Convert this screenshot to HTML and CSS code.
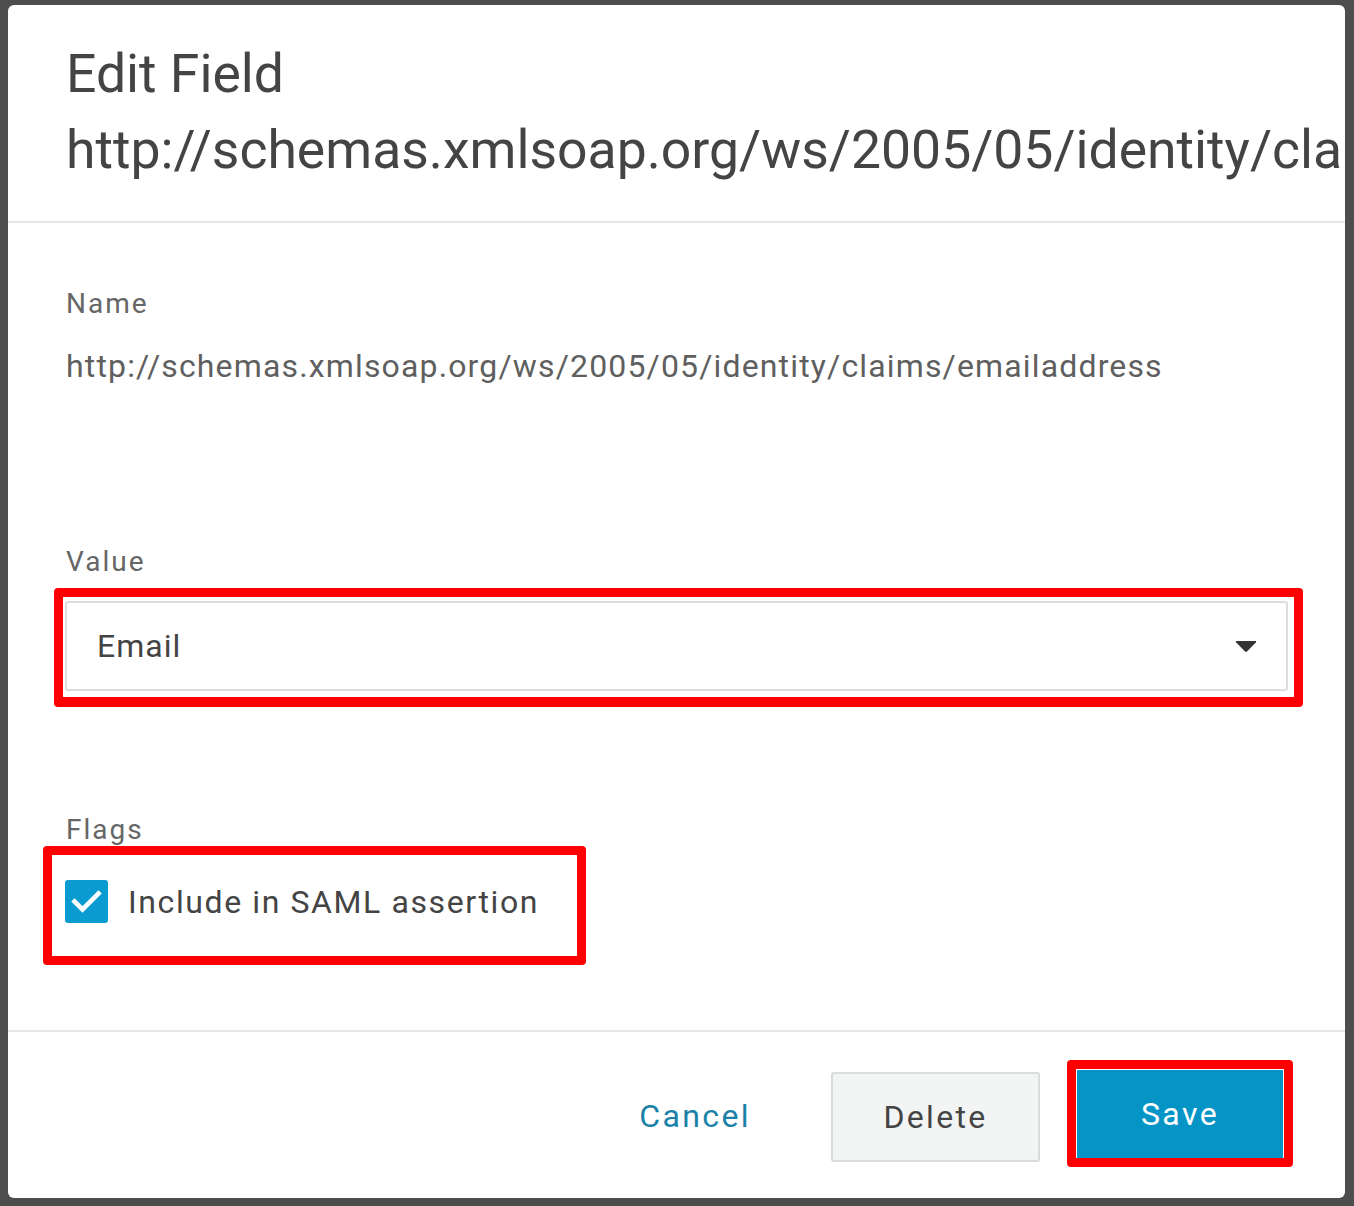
FILE: index.html
```html
<!DOCTYPE html>
<html lang="en">
<head>
<meta charset="utf-8">
<title>Edit Field</title>
<link rel="stylesheet" href="styles.css">
</head>
<body>
<div class="dialog">
  <header class="dialog-header">
    <h1 class="title">Edit Field<br>http://schemas.xmlsoap.org/ws/2005/05/identity/claims/emailaddress</h1>
  </header>
  <main class="dialog-body">
    <div class="label name-label">Name</div>
    <div class="name-value">http://schemas.xmlsoap.org/ws/2005/05/identity/claims/emailaddress</div>

    <div class="label value-label">Value</div>
    <div class="annot annot-select">
      <div class="select">
        <span class="select-text">Email</span>
        <svg class="select-arrow" width="22" height="11" viewBox="0 0 22 11"><path d="M1 1.2 Q0.4 0 1.8 0 L20.2 0 Q21.6 0 21 1.2 L12.2 10.2 Q11 11.3 9.8 10.2 Z" fill="#333"/></svg>
      </div>
    </div>

    <div class="label flags-label">Flags</div>
    <div class="annot annot-check">
      <label class="check-row">
        <span class="checkbox">
          <svg width="43" height="43" viewBox="0 0 43 43"><polyline points="9.5,21.5 17.5,29.5 33.5,13.5" fill="none" stroke="#fff" stroke-width="4.6" stroke-linecap="square"/></svg>
        </span>
        <span class="check-text">Include in SAML assertion</span>
      </label>
    </div>
  </main>
  <footer class="dialog-footer">
    <button class="btn btn-link">Cancel</button>
    <button class="btn btn-secondary">Delete</button>
    <div class="annot annot-save">
      <button class="btn btn-primary">Save</button>
    </div>
  </footer>
</div>
</body>
</html>
```

FILE: styles.css
```css
* { box-sizing: border-box; }

html, body {
  margin: 0;
  height: 1206px;
}

body {
  background: #4d4d4d;
  padding: 5px 9px 8px 8px;
  font-family: Roboto, "Liberation Sans", Arial, sans-serif;
  overflow: hidden;
}

.dialog {
  background: #fff;
  border-radius: 6px;
  height: 1193px;
  display: flex;
  flex-direction: column;
  overflow: hidden;
}

.dialog-header {
  padding: 31px 0 33px 58px;
  border-bottom: 2px solid #e6e7e7;
}

.title {
  margin: 0;
  font-size: 53.5px;
  line-height: 76px;
  font-weight: 400;
  color: #444;
  white-space: nowrap;
}

.dialog-body {
  flex: 1;
  padding-left: 58px;
}

.label {
  font-size: 28px;
  line-height: 40px;
  letter-spacing: 2px;
  color: #666;
}

.name-label { margin-top: 61px; }

.name-value {
  margin-top: 22px;
  font-size: 32px;
  line-height: 40px;
  letter-spacing: 1.15px;
  color: #5f5f5f;
  white-space: nowrap;
}

.value-label { margin-top: 156px; }

.annot {
  border: 9px solid #ff0000;
  border-radius: 4px;
}

.annot-select {
  margin-top: 6px;
  margin-left: -12px;
  width: 1249px;
  padding: 4px 6px 6px 2px;
  border-bottom-width: 10px;
}

.select {
  height: 90px;
  border: 2px solid #dcdddd;
  border-radius: 3px;
  display: flex;
  align-items: center;
  justify-content: space-between;
  padding: 0 29px 0 30px;
}

.select-text {
  font-size: 32px;
  letter-spacing: 1px;
  color: #444;
}

.select-arrow { display: block; }

.flags-label { margin-top: 103px; }

.annot-check {
  margin-top: -4px;
  margin-left: -23px;
  width: 543px;
  padding: 25px 0 33px 13px;
}

.check-row {
  display: flex;
  align-items: center;
  gap: 20px;
}

.checkbox {
  width: 43px;
  height: 43px;
  border-radius: 3px;
  background: #0a9bd0;
  display: block;
}

.checkbox svg { display: block; }

.check-text {
  font-size: 32px;
  letter-spacing: 1.6px;
  color: #444;
}

.dialog-footer {
  height: 168px;
  border-top: 2px solid #e6e7e7;
  display: flex;
  align-items: center;
  justify-content: flex-end;
  padding: 0 52px 4px 0;
}

.btn {
  font-family: Roboto, "Liberation Sans", Arial, sans-serif;
  font-size: 32px;
  letter-spacing: 2px;
  border: none;
  background: none;
  padding: 0;
  cursor: pointer;
}

.btn-link {
  color: #1a82a8;
  letter-spacing: 2.4px;
  margin-right: 80px;
  margin-top: 6px;
}

.btn-secondary {
  width: 209px;
  height: 90px;
  background: #f3f4f4;
  border: 2px solid #dadbdb;
  border-radius: 3px;
  color: #444;
  letter-spacing: 2.3px;
  margin-right: 27px;
  margin-top: 8px;
}

.annot-save {
  padding: 1px 1px 0 1px;
}

.btn-primary {
  display: block;
  width: 206px;
  height: 88px;
  background: #0494c6;
  color: #fff;
  letter-spacing: 2.4px;
}
```
